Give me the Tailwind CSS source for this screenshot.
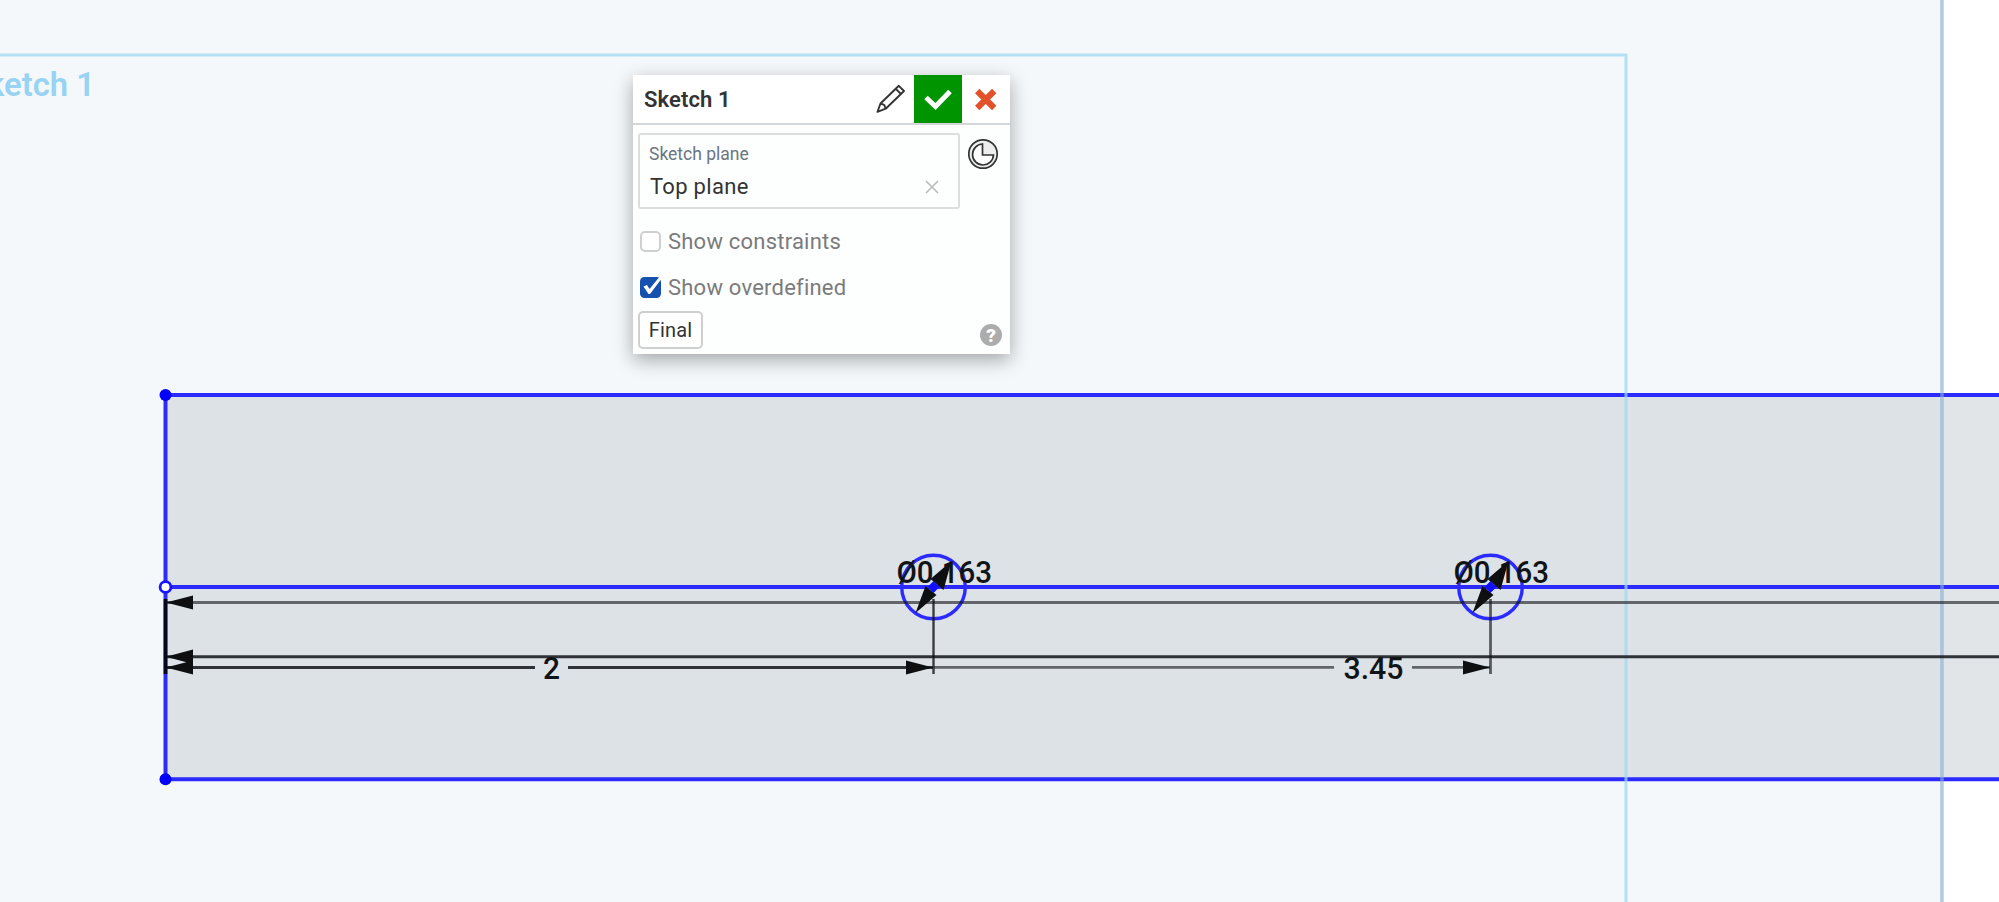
<!DOCTYPE html>
<html lang="en">
<head>
<meta charset="utf-8">
<title>Sketch 1</title>
<script src="https://cdn.jsdelivr.net/npm/@tailwindcss/browser@4"></script>
</head>
<body class="relative h-[902px] w-[1999px] overflow-hidden bg-white font-['Roboto',sans-serif]">
<svg class="block" width="1999" height="902" viewBox="0 0 1999 902">
  <rect width="1942" height="902" fill="#f4f8fb"/>
  <!-- extruded region -->
  <rect x="165" y="395" width="1777" height="384" fill="#dde2e6"/>
  <rect x="1942" y="395" width="57" height="384" fill="#e1e5e8"/>
  <g stroke="#2b2bff" stroke-width="4" fill="none">
    <path d="M1999 395H165.5V779.2H1999M165.5 587H1999"/>
    <circle cx="933.5" cy="587" r="31.8" stroke-width="3.4"/>
    <circle cx="1490.5" cy="587" r="31.8" stroke-width="3.4"/>
  </g>
  <!-- plane outlines -->
  <path d="M0 55H1626V902" fill="none" stroke="#9ed8f3" stroke-opacity=".75" stroke-width="3"/>
  <path d="M1942 0V902" stroke="#8badd3" stroke-opacity=".62" stroke-width="3.6"/>
  <text x="95" y="95.5" text-anchor="end" font-size="34" font-weight="600" fill="#98d3f3" textLength="128" lengthAdjust="spacingAndGlyphs">Sketch 1</text>
  <!-- dimension lines -->
  <g stroke="#111417" fill="none">
    <path d="M166 602.5H1999" stroke-width="2.8" stroke-opacity=".6"/>
    <path d="M166 656.7H1999" stroke-width="3" stroke-opacity=".85"/>
    <path d="M166 667.4H535M568 667.4H933" stroke-width="3" stroke-opacity=".85"/>
    <path d="M934 667.4H1334M1412 667.4H1490" stroke-width="2.8" stroke-opacity=".6"/>
    <path d="M933.5 599V674" stroke-width="2.4" stroke-opacity=".8"/>
    <path d="M1490.5 599V674" stroke-width="2.8" stroke-opacity=".65"/>
    <path d="M165.5 599V674" stroke-width="3.6" stroke="#06061e"/>
  </g>
  <g fill="#0d0f11">
    <path d="M166 602.5L193 595.5V609.5ZM166 656.7L193 649.5V664ZM166 667.4L193 660.4V674.4Z"/>
    <path d="M933 667.4L906 660.4V674.4ZM1490 667.4L1463 660.4V674.4Z"/>
  </g>
  <g font-size="31.5" font-weight="500" fill="#111417">
    <text x="896.5" y="583" textLength="95.5" lengthAdjust="spacingAndGlyphs">Ø0.163</text>
    <text x="1453.5" y="583" textLength="95.5" lengthAdjust="spacingAndGlyphs">Ø0.163</text>
    <text x="551.5" y="678.7" text-anchor="middle" textLength="17" lengthAdjust="spacingAndGlyphs">2</text>
    <text x="1343.5" y="679" textLength="60" lengthAdjust="spacingAndGlyphs">3.45</text>
  </g>
  <g id="diameter-marks">
    <g transform="translate(933.5 587)">
      <path d="M18 -26L-3 -8L10 3ZM-18 26L-8 -1L3 8Z" fill="#0d0f11"/>
      <path d="M0 -6L6 0L0 6L-6 0Z" fill="#1010ff"/>
    </g>
    <g transform="translate(1490.5 587)">
      <path d="M18 -26L-3 -8L10 3ZM-18 26L-8 -1L3 8Z" fill="#0d0f11"/>
      <path d="M0 -6L6 0L0 6L-6 0Z" fill="#1010ff"/>
    </g>
  </g>
  <circle cx="165.5" cy="395" r="6" fill="#0000fc"/>
  <circle cx="165.5" cy="779.2" r="6" fill="#0000fc"/>
  <circle cx="165.5" cy="587" r="5.4" fill="#fff" stroke="#1515ff" stroke-width="2.8"/>
</svg>

<section class="absolute left-[633px] top-[75px] flex h-[279px] w-[377px] flex-col bg-[#fdfefe] text-[#333] shadow-[0_6px_18px_rgba(0,0,0,0.33)]">
  <header class="flex h-[50px] shrink-0 items-stretch border-b-2 border-[#d4d7da] bg-white">
    <h1 class="flex flex-1 items-center whitespace-nowrap pl-[11px] pt-px text-[22px] font-semibold tracking-[0.1px] text-[#333]">Sketch 1</h1>
    <svg class="h-12 w-12" viewBox="0 0 48 48" fill="none" stroke="#333" stroke-width="1.9" stroke-linejoin="round"><path d="M11.5 36.8L14.5 28.5L32.8 10.8L38 16L19.7 33.7ZM14.5 28.5L18.2 29.8L19.7 33.7M29.8 13.8L35 19"/></svg>
    <button class="h-12 w-12 bg-[#009400]"><svg class="h-12 w-12" viewBox="0 0 48 48" fill="none" stroke="#fff" stroke-width="5"><path d="M12 22.5L21.5 31.5L36 16.5"/></svg></button>
    <svg class="h-12 w-12" viewBox="0 0 48 48" stroke="#e1522a" stroke-width="6.2"><path d="M15.2 16L32.2 33M32.2 16L15.2 33"/></svg>
  </header>
  <div class="flex gap-2 pl-[5px] pt-2">
    <div class="flex h-[76px] w-[322px] flex-col rounded-[3px] border-2 border-[#dcdedd] pl-[9px]">
      <span class="mt-[7px] text-[17.5px] leading-6 text-[#6b7580]">Sketch plane</span>
      <div class="mt-[7px] flex items-center justify-between pl-px pr-[19px] text-[22px] leading-7 tracking-[0.3px] text-[#333]">
        <span>Top plane</span>
        <svg class="h-[14px] w-[14px]" viewBox="0 0 14 14" stroke="#bbb" stroke-width="1.7"><path d="M1 1L13 13M13 1L1 13"/></svg>
      </div>
    </div>
    <svg class="mt-[5px] h-8 w-8" viewBox="0 0 32 32" fill="none" stroke="#333" stroke-width="1.7"><circle cx="15" cy="16" r="14.2" fill="#eee"/><path d="M14.5 6A10.5 10.5 0 1 0 25.5 17H14.5Z" fill="#fff"/></svg>
  </div>
  <label class="ml-[7px] mt-4 flex h-8 items-center gap-[7px] text-[22px] tracking-[0.22px] text-[#7b7b7b]">
    <span class="h-[21px] w-[21px] rounded-[5px] border-2 border-[#cfcfcf] bg-white"></span><span class="whitespace-nowrap">Show constraints</span>
  </label>
  <label class="ml-[7px] mt-[14px] flex h-8 items-center gap-[7px] text-[22px] tracking-[0.22px] text-[#7b7b7b]">
    <svg class="h-[21px] w-[21px] overflow-visible" viewBox="0 0 21 21"><rect width="21" height="21" rx="4.5" fill="#1651b0"/><path d="M3.5 9.5L7 8L9.5 12L18.5 1L22.5 0.5L10 17H8.5Z" fill="#fff"/></svg><span class="whitespace-nowrap">Show overdefined</span>
  </label>
  <footer class="mt-2 flex items-start justify-between pl-[5px] pr-2">
    <button class="h-[38px] w-[65px] rounded-[5px] border-2 border-[#cfcfcf] bg-white pb-px text-[20px] tracking-[0.2px] text-[#333]">Final</button>
    <span class="mt-[13px] flex h-[22px] w-[22px] items-center justify-center rounded-full bg-[#acacac] text-[19px] font-black leading-none text-white">?</span>
  </footer>
</section>
</body>
</html>
